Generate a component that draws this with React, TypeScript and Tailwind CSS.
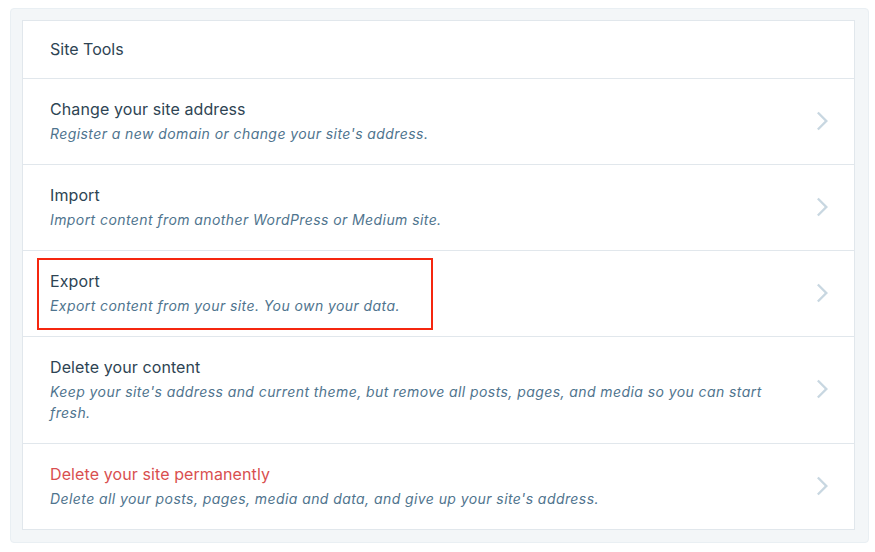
import React from "react";

const Chevron = () => (
  <svg width="28" height="28" viewBox="0 0 24 24" className="shrink-0" aria-hidden="true">
    <path d="M10 20l8-8-8-8-1.414 1.414L15.172 12l-6.586 6.586z" fill="#c8d7e1" />
  </svg>
);

type Item = { title: string; desc: string; danger?: boolean; highlight?: boolean };

const items: Item[] = [
  { title: "Change your site address", desc: "Register a new domain or change your site's address." },
  { title: "Import", desc: "Import content from another WordPress or Medium site." },
  { title: "Export", desc: "Export content from your site. You own your data.", highlight: true },
  {
    title: "Delete your content",
    desc: "Keep your site's address and current theme, but remove all posts, pages, and media so you can start fresh.",
  },
  {
    title: "Delete your site permanently",
    desc: "Delete all your posts, pages, media and data, and give up your site's address.",
    danger: true,
  },
];

export default function App() {
  return (
    <div
      className="w-[875px] h-[552px] bg-white pt-[8px] pl-[10px]"
      style={{ fontFamily: "Inter, 'Open Sans', Arial, sans-serif" }}
    >
      <div className="w-[859px] rounded-[4px] bg-[#f3f6f8] border border-[#e9eff3] pt-[11px] pb-[12px] pl-[11px] pr-[13px]">
        <div className="bg-white border border-[#e1e7ec]">
          <div className="pl-[27px] pt-4 pb-[17px] border-b border-[#e1e7ec] text-[16px] leading-[24px] text-[#2e4453]">
            Site Tools
          </div>
          {items.map((it, i) => (
            <div
              key={i}
              className={`relative flex items-center pl-[27px] pr-[19px] pt-[18px] pb-[20px] ${
                i < items.length - 1 ? "border-b border-[#e1e7ec]" : ""
              }`}
            >
              {it.highlight && (
                <div className="absolute left-[14px] top-[7px] w-[396px] h-[72px] border-2 border-[#f5260f] pointer-events-none" />
              )}
              <div className="flex-1 pr-[40px]">
                <div
                  className={`text-[16px] leading-[24px] tracking-[0.1px] ${it.danger ? "text-[#d94f4f]" : "text-[#2e4453]"}`}
                >
                  {it.title}
                </div>
                <div className="mt-0.5 text-[14px] leading-[21px] italic tracking-[0.42px] text-[#4f748e]">
                  {it.desc}
                </div>
              </div>
              <Chevron />
            </div>
          ))}
        </div>
      </div>
    </div>
  );
}
